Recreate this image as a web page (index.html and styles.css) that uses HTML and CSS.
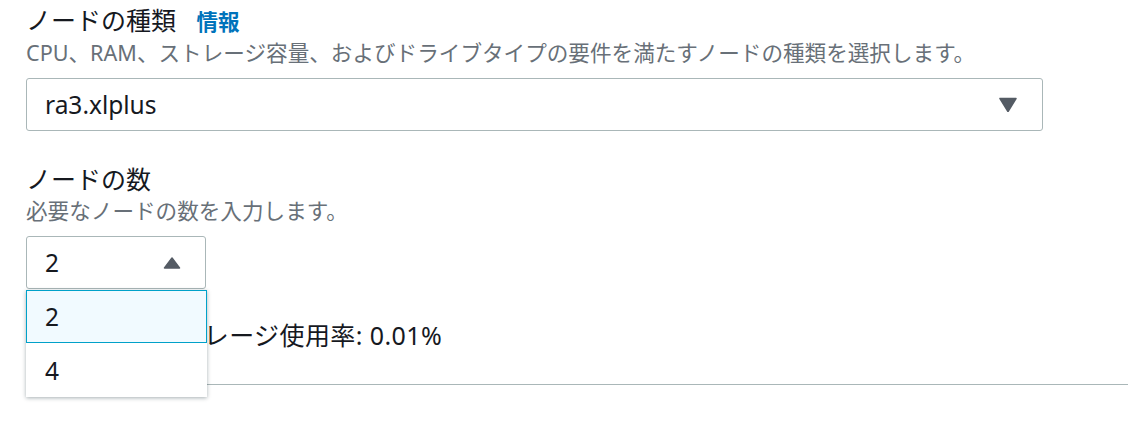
FILE: index.html
```html
<!DOCTYPE html>
<html lang="ja">
<head>
<meta charset="utf-8">
<title>ノードの設定</title>
<link rel="stylesheet" href="styles.css">
</head>
<body>
<div class="page">
  <div class="field first">
    <div class="label">ノードの種類 <a class="info" href="#">情報</a></div>
    <div class="desc">CPU、RAM、ストレージ容量、およびドライブタイプの要件を満たすノードの種類を選択します。</div>
    <div class="select wide">
      <span class="value">ra3.xlplus</span>
      <svg class="caret" width="18" height="15" viewBox="0 0 18 15"><path d="M1 1.5h16l-8 13z" fill="#545b64" stroke="#545b64" stroke-width="1.5" stroke-linejoin="round"/></svg>
    </div>
  </div>
  <div class="field second">
    <div class="label">ノードの数</div>
    <div class="desc">必要なノードの数を入力します。</div>
    <div class="select-wrap">
      <div class="select small">
        <span class="value">2</span>
        <svg class="caret" width="18" height="12" viewBox="0 0 18 12"><path d="M1.5 11h15l-7.5-10z" fill="#545b64" stroke="#545b64" stroke-width="1.5" stroke-linejoin="round"/></svg>
      </div>
      <ul class="dropdown">
        <li class="option selected">2</li>
        <li class="option">4</li>
      </ul>
    </div>
  </div>
  <div class="usage">予測されるストレージ使用率: 0.01%</div>
  <div class="divider"></div>
</div>
</body>
</html>
```
FILE: styles.css
```css
* { box-sizing: border-box; }
html, body { margin: 0; padding: 0; background: #fff; }
body {
  font-family: "Noto Sans", "Noto Sans CJK JP", sans-serif;
  color: #16191f;
}
.page {
  padding: 0 0 0 26px;
  min-height: 422px;
}
.label {
  font-size: 25px;
  line-height: 35px;
  color: #16191f;
}
.first .label { padding-top: 3px; }
.info {
  color: #0073bb;
  font-weight: 700;
  font-size: 21.5px;
  text-decoration: none;
  margin-left: 14px;
}
.desc {
  font-size: 21.6px;
  line-height: 28px;
  color: #687078;
}
.select {
  display: flex;
  align-items: center;
  justify-content: space-between;
  height: 53px;
  border: 1px solid #aab7b8;
  border-radius: 3px;
  background: #fff;
  padding: 0 25px 0 18px;
  font-size: 24.5px;
  color: #16191f;
}
.first .select { margin-top: 11px; }
.wide { width: 1017px; }
.second { margin-top: 31px; }
.select-wrap {
  position: relative;
  width: 180px;
  margin-top: 11px;
}
.small { width: 180px; padding-right: 24px; }
.dropdown {
  position: absolute;
  top: 100%;
  left: 0;
  width: 181px;
  margin: 1px 0 0;
  padding: 0;
  list-style: none;
  background: #fff;
  box-shadow: 0 1px 4px rgba(0, 28, 36, 0.35);
  z-index: 5;
}
.option {
  height: 54px;
  display: flex;
  align-items: center;
  padding-left: 19px;
  font-size: 24.5px;
  color: #16191f;
  background: #fff;
}
.option.selected {
  height: 53px;
  background: #f1faff;
  border: 1px solid #00a1c9;
  padding-left: 18px;
}
.usage {
  margin-top: 29px;
  font-size: 25px;
  line-height: 35px;
  color: #16191f;
  letter-spacing: 0.4px;
}
.divider {
  margin-top: 31px;
  border-top: 1px solid #aab7b8;
}
```
